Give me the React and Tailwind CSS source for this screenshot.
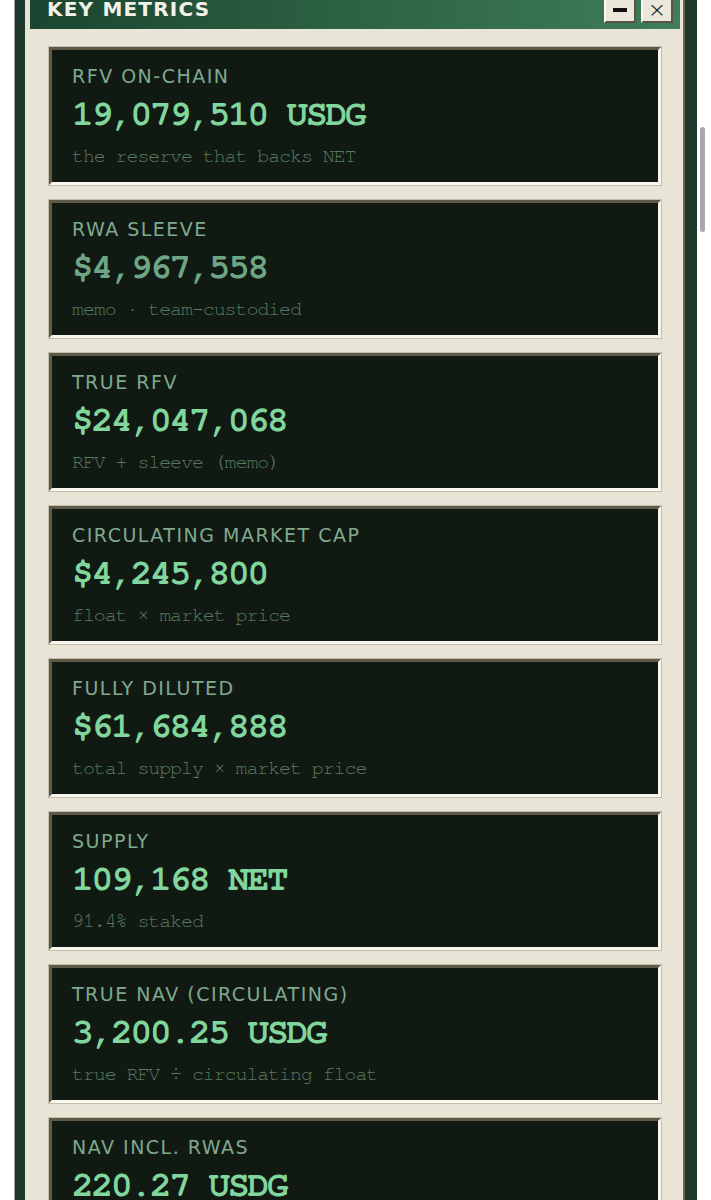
import React from 'react'

const metrics = [
  { label: 'RFV ON-CHAIN', value: '19,079,510 USDG', note: 'the reserve that backs NET' },
  { label: 'RWA SLEEVE', value: '$4,967,558', note: 'memo · team-custodied', dim: true },
  { label: 'TRUE RFV', value: '$24,047,068', note: 'RFV + sleeve (memo)' },
  { label: 'CIRCULATING MARKET CAP', value: '$4,245,800', note: 'float × market price' },
  { label: 'FULLY DILUTED', value: '$61,684,888', note: 'total supply × market price' },
  { label: 'SUPPLY', value: '109,168 NET', note: '91.4% staked' },
  { label: 'TRUE NAV (CIRCULATING)', value: '3,200.25 USDG', note: 'true RFV ÷ circulating float' },
  { label: 'NAV INCL. RWAS', value: '220.27 USDG', note: 'on-chain RFV ÷ total supply' },
]

const MetricCard = ({ label, value, note, dim }) => (
  <div className="h-[138px] bg-[#101a13] border-[3px] border-t-[#5f5a48] border-l-[#5f5a48] border-b-[#f8f6ee] border-r-[#f8f6ee] shadow-[0_0_0_1px_#c4bfad] pt-[14px] pl-[20px]">
    <div className="text-[19px] leading-[24px] tracking-[1.5px] text-[#80a98e] font-['DejaVu_Sans',sans-serif]">
      {label}
    </div>
    <div
      className={`mt-[6px] text-[36px] leading-[40px] tracking-[-2.1px] font-bold font-['Nimbus_Mono_PS','Nimbus_Mono_L','FreeMono','Courier_New','Liberation_Mono',monospace] ${dim ? 'text-[#6ea584]' : 'text-[#80d69c]'}`}
    >
      {value}
    </div>
    <div className="mt-[10px] text-[20px] leading-[24px] tracking-[-1.1px] text-[#58795f] font-['Nimbus_Mono_PS','Nimbus_Mono_L','FreeMono','Courier_New','Liberation_Mono',monospace]">
      {note}
    </div>
  </div>
)

const TitleButton = ({ children }) => (
  <button className="w-[32px] h-[27px] bg-[#ebe7da] border-2 border-t-[#fbfaf4] border-l-[#fbfaf4] border-b-[#5a5546] border-r-[#5a5546] flex items-center justify-center text-[#111] font-['DejaVu_Sans',sans-serif]">
    {children}
  </button>
)

export default function App() {
  return (
    <div className="relative min-h-screen bg-white">
      <div className="-mt-[11px] ml-[15px] w-[682px] bg-[#e8e4d6] border-l-[10px] border-r-[12px] border-[#1f382c] shadow-[inset_-2px_0_0_#6a6452,-1px_0_0_#9ea39f] px-[5px] pb-[20px]">
        <div className="h-[40px] flex items-center justify-between bg-gradient-to-r from-[#1b4530] via-[#2d6343] to-[#3f7e57] pl-[17px] pr-[7px]">
          <h1 className="text-[20px] font-bold tracking-[1.2px] text-[#f3f1e8] font-['DejaVu_Sans',sans-serif]">KEY METRICS</h1>
          <div className="flex gap-[5px] mt-[1px]">
            <TitleButton>
              <span className="block w-[14px] h-[4px] bg-[#111]" />
            </TitleButton>
            <TitleButton>
              <span className="text-[22px] leading-none font-extralight">×</span>
            </TitleButton>
          </div>
        </div>
        <div className="px-[19px] pt-[18px] flex flex-col gap-[15px]">
          {metrics.map((m) => (
            <MetricCard key={m.label} {...m} />
          ))}
        </div>
      </div>
      <div className="fixed left-[700px] top-[127px] w-[5px] h-[105px] rounded-full bg-[#a9a9ad]" />
    </div>
  )
}
